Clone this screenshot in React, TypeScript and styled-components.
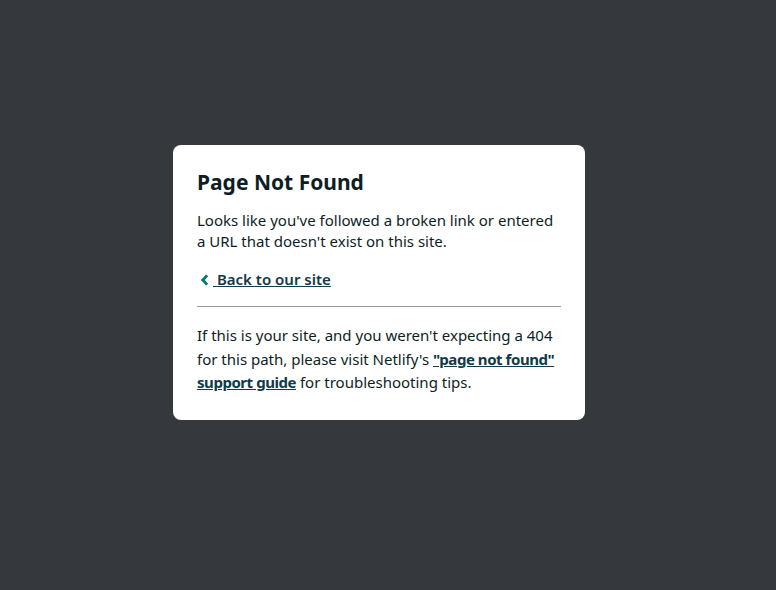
import React from 'react';
import styled, { createGlobalStyle } from 'styled-components';

const GlobalStyle = createGlobalStyle`
  html, body {
    margin: 0;
    padding: 0;
    height: 100%;
  }
  body {
    background: #35383c;
    font-family: 'Noto Sans', 'Open Sans', sans-serif;
    color: #0e1e25;
  }
  #root {
    height: 100%;
  }
`;

const Page = styled.div`
  display: flex;
  justify-content: center;
  padding: 145px 18px 0 0;
`;

const Card = styled.div`
  width: 364px;
  background: #fff;
  border-radius: 8px;
  padding: 24px 24px 25px;
`;

const Title = styled.h1`
  margin: 0;
  font-size: 21px;
  line-height: 26px;
  font-weight: 700;
`;

const Text = styled.p`
  margin: 15px 0 0;
  font-size: 15px;
  line-height: 21px;
`;

const BackLink = styled.a`
  display: inline-block;
  margin-top: 17px;
  font-size: 15px;
  font-weight: 600;
  line-height: 21px;
  color: #0e3a4a;
  text-decoration: underline;
  cursor: pointer;

  svg {
    margin-left: 3px;
    margin-right: 3px;
    vertical-align: -1px;
  }
`;

const Rule = styled.hr`
  border: 0;
  border-top: 1px solid #9a9c9e;
  margin: 16px 0 17px;
`;

const Note = styled.p`
  margin: 0;
  font-size: 15px;
  line-height: 23.5px;
`;

const StrongLink = styled.a`
  font-weight: 700;
  letter-spacing: -0.45px;
  color: #0e3a4a;
  text-decoration: underline;
`;

const App = () => {
  return (
    <>
      <GlobalStyle />
      <Page>
        <Card>
          <Title>Page Not Found</Title>
          <Text>
            Looks like you've followed a broken link or entered a URL that doesn't exist on this
            site.
          </Text>
          <BackLink href="#">
            <svg width="10" height="12" viewBox="0 0 10 12">
              <path d="M7.2 1.4 L2.8 6 L7.2 10.6" fill="none" stroke="#00796b" strokeWidth="2.8" />
            </svg>
            {' '}Back to our site
          </BackLink>
          <Rule />
          <Note>
            If this is your site, and you weren't expecting a 404 for this path, please visit
            Netlify's <StrongLink href="#">"page not found" support guide</StrongLink> for
            troubleshooting tips.
          </Note>
        </Card>
      </Page>
    </>
  );
};

export default App;
